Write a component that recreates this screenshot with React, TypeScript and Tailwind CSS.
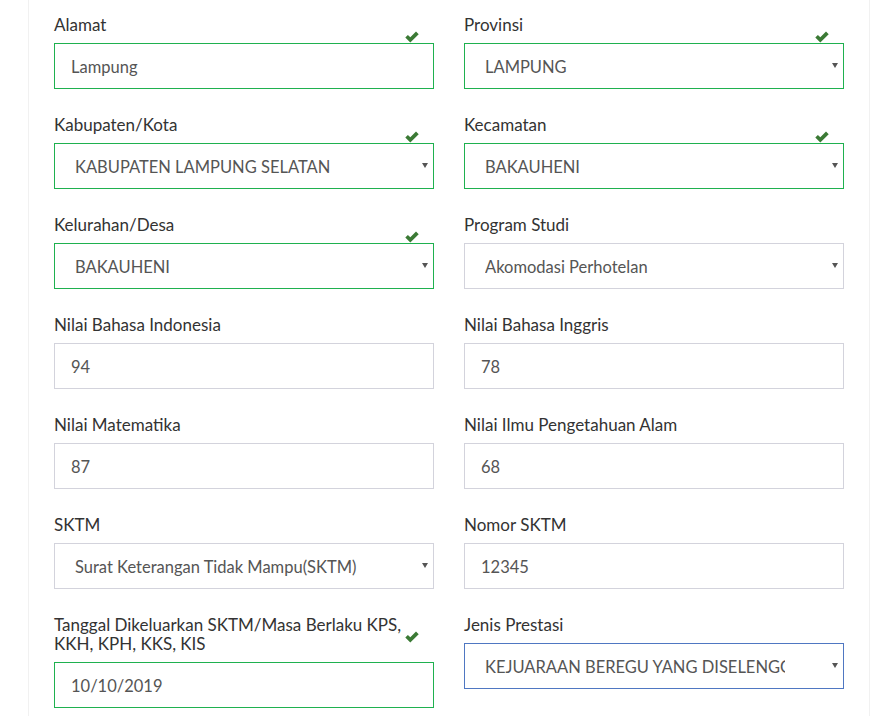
import React from 'react';

type Field = {
  label: string;
  value: string;
  kind: 'text' | 'select';
  state?: 'ok' | 'focus';
};

const ROWS: Field[][] = [
  [
    { label: 'Alamat', value: 'Lampung', kind: 'text', state: 'ok' },
    { label: 'Provinsi', value: 'LAMPUNG', kind: 'select', state: 'ok' },
  ],
  [
    { label: 'Kabupaten/Kota', value: 'KABUPATEN LAMPUNG SELATAN', kind: 'select', state: 'ok' },
    { label: 'Kecamatan', value: 'BAKAUHENI', kind: 'select', state: 'ok' },
  ],
  [
    { label: 'Kelurahan/Desa', value: 'BAKAUHENI', kind: 'select', state: 'ok' },
    { label: 'Program Studi', value: 'Akomodasi Perhotelan', kind: 'select' },
  ],
  [
    { label: 'Nilai Bahasa Indonesia', value: '94', kind: 'text' },
    { label: 'Nilai Bahasa Inggris', value: '78', kind: 'text' },
  ],
  [
    { label: 'Nilai Matematika', value: '87', kind: 'text' },
    { label: 'Nilai Ilmu Pengetahuan Alam', value: '68', kind: 'text' },
  ],
  [
    { label: 'SKTM', value: 'Surat Keterangan Tidak Mampu(SKTM)', kind: 'select' },
    { label: 'Nomor SKTM', value: '12345', kind: 'text' },
  ],
  [
    { label: 'Tanggal Dikeluarkan SKTM/Masa Berlaku KPS, KKH, KPH, KKS, KIS', value: '10/10/2019', kind: 'text', state: 'ok' },
    { label: 'Jenis Prestasi', value: 'KEJUARAAN BEREGU YANG DISELENGGARAKAN', kind: 'select', state: 'focus' },
  ],
];

const CheckIcon = () => (
  <svg width="14" height="12" viewBox="0 0 14 12" className="absolute right-[15px] top-[16px]">
    <path d="M0.3 6.6 L2.9 4 L5.3 6.3 L11 0.6 L13.7 3.2 L5.3 11.4 Z" fill="#3b7a35" />
  </svg>
);

const FormField = ({ field }: { field: Field }) => {
  const border =
    field.state === 'ok'
      ? 'border-[#1fb14f]'
      : field.state === 'focus'
      ? 'border-[#4f77c2]'
      : 'border-[#d3d3dc]';

  return (
    <div className="relative">
      <label className="block pr-[20px] text-[17px] leading-[19px] text-[#333] mb-[9px]">{field.label}</label>
      {field.state === 'ok' && <CheckIcon />}
      {field.kind === 'text' ? (
        <input
          readOnly
          value={field.value}
          className={`block w-full h-[46px] border ${border} bg-white px-[16px] pt-[2px] text-[16.5px] text-[#555] outline-none`}
        />
      ) : (
        <div className="relative">
          <select
            value={field.value}
            onChange={() => {}}
            className={`block w-full h-[46px] appearance-none rounded-none border ${border} bg-white pl-[20px] pr-[58px] pt-[2px] text-[16.5px] text-[#555] outline-none`}
          >
            <option value={field.value}>{field.value}</option>
          </select>
          <span className="pointer-events-none absolute right-[6px] top-[20px] w-0 h-0 border-l-[3px] border-r-[3px] border-t-[5px] border-l-transparent border-r-transparent border-t-[#555]" />
        </div>
      )}
    </div>
  );
};

const App: React.FC = () => {
  return (
    <div className="min-h-screen bg-white" style={{ fontFamily: 'Lato, "Noto Sans", sans-serif' }}>
      <div className="ml-[28px] w-[842px] min-h-screen border-x border-[#f1f1f1] px-[25px] pt-[15px]">
        <div className="flex flex-col gap-[26px]">
          {ROWS.map((row, i) => (
            <div key={i} className="grid grid-cols-2 gap-x-[30px] items-start">
              {row.map((f) => (
                <FormField key={f.label} field={f} />
              ))}
            </div>
          ))}
        </div>
      </div>
    </div>
  );
};

export default App;
